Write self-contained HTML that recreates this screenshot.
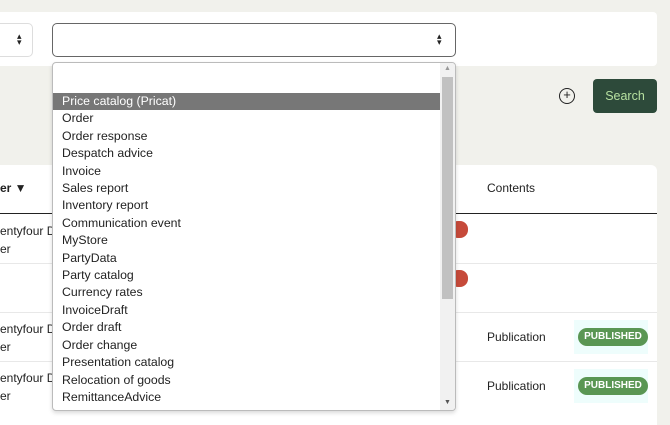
<!DOCTYPE html>
<html><head><style>
*{margin:0;padding:0;box-sizing:border-box}
body{width:670px;height:414px;overflow:hidden;background:#f1f1ec;font-family:"Liberation Sans",sans-serif;position:relative;font-size:12px;color:#222}
.abs{position:absolute}
</style></head><body>
<div class="abs" style="left:0;top:12px;width:657px;height:54px;background:#fff;border-radius:0 4px 4px 0"></div>
<div class="abs" style="left:-5px;top:23px;width:38px;height:34px;border:1px solid #ddd;border-radius:5px;background:#fff"></div>
<div class="abs" style="left:17px;top:33px;font-size:9px;line-height:6px">▴<br>▾</div>
<div class="abs" style="left:52px;top:23px;width:404px;height:34px;border:1px solid #666;border-radius:5px;background:#fff"></div>
<div class="abs" style="left:437px;top:33px;font-size:9px;line-height:6px">▴<br>▾</div>
<div class="abs" style="left:559px;top:88px;width:16px;height:16px;border:1.5px solid #222;border-radius:50%;text-align:center;line-height:12px;font-size:13px">+</div>
<div class="abs" style="left:593px;top:79px;width:64px;height:34px;background:#2d4a3a;border-radius:4px;color:#b6e0a0;text-align:center;line-height:34px;font-size:12.5px">Search</div>
<div class="abs" style="left:0;top:165px;width:657px;height:260px;background:#fff;border-radius:0 6px 0 0"></div>
<div class="abs" style="left:0;top:181px;font-weight:bold">er ▼</div>
<div class="abs" style="left:487px;top:181px">Contents</div>
<div class="abs" style="left:0;top:213px;width:657px;height:1px;background:#222"></div>
<div class="abs" style="left:0;top:263px;width:657px;height:1px;background:#e8e8e8"></div>
<div class="abs" style="left:0;top:312px;width:657px;height:1px;background:#e8e8e8"></div>
<div class="abs" style="left:0;top:361px;width:657px;height:1px;background:#e8e8e8"></div>
<div class="abs" style="left:0;top:222px;line-height:18px">entyfour D<br>er</div>
<div class="abs" style="left:0;top:320px;line-height:18px">entyfour D<br>er</div>
<div class="abs" style="left:0;top:369px;line-height:18px">entyfour D<br>er</div>
<div class="abs" style="left:450px;top:221px;width:18px;height:17px;background:#c64a3a;border-radius:8px"></div>
<div class="abs" style="left:450px;top:270px;width:18px;height:17px;background:#c64a3a;border-radius:8px"></div>
<div class="abs" style="left:487px;top:330px">Publication</div>
<div class="abs" style="left:487px;top:379px">Publication</div>
<div class="abs" style="left:574px;top:320px;width:74px;height:34px;background:#eefdfc"></div>
<div class="abs" style="left:574px;top:369px;width:74px;height:34px;background:#eefdfc"></div>
<div class="abs" style="left:578px;top:328px;width:70px;height:18px;background:#5a9653;border-radius:9px;color:#fff;font-weight:bold;font-size:10px;text-align:center;line-height:18px">PUBLISHED</div>
<div class="abs" style="left:578px;top:377px;width:70px;height:18px;background:#5a9653;border-radius:9px;color:#fff;font-weight:bold;font-size:10px;text-align:center;line-height:18px">PUBLISHED</div>
<div class="abs" style="left:52px;top:62px;width:404px;height:349px;background:#fff;border:1px solid #bbb;border-radius:4px;box-shadow:0 2px 4px rgba(0,0,0,.15);overflow:hidden">
<div class="abs" style="left:387px;top:0;width:15px;height:347px;background:#f1f1f1"></div>
<div class="abs" style="left:389px;top:14px;width:11px;height:222px;background:#c1c1c1"></div>
<div class="abs" style="left:391px;top:2px;font-size:7px;color:#999">▲</div>
<div class="abs" style="left:391px;top:336px;font-size:7px;color:#555">▼</div>
<div class="abs" style="left:0;top:30px;width:387px;font-size:12.3px;line-height:17.4px">
<div style="background:#777;color:#fff;padding-left:9px">Price catalog (Pricat)</div>
<div style="padding-left:9px">Order<br>Order response<br>Despatch advice<br>Invoice<br>Sales report<br>Inventory report<br>Communication event<br>MyStore<br>PartyData<br>Party catalog<br>Currency rates<br>InvoiceDraft<br>Order draft<br>Order change<br>Presentation catalog<br>Relocation of goods<br>RemittanceAdvice</div>
</div></div>
</body></html>
